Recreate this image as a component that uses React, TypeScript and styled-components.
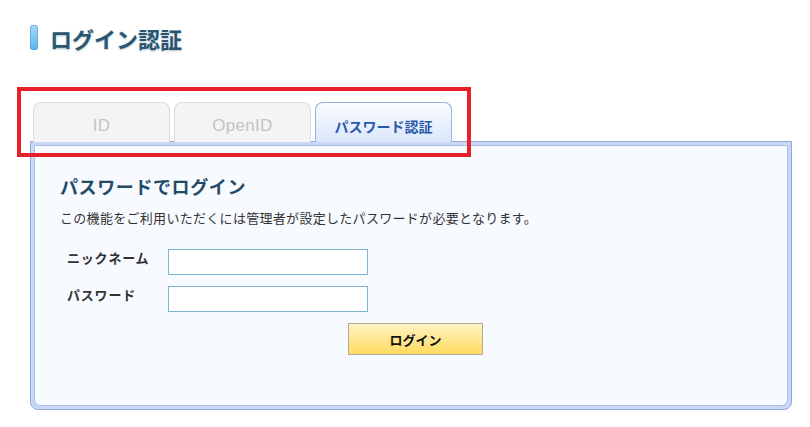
import React, { useState } from 'react';
import styled, { createGlobalStyle, css } from 'styled-components';

const GlobalStyle = createGlobalStyle`
  html, body {
    margin: 0;
    padding: 0;
    background: #ffffff;
    font-family: "Liberation Sans", "Noto Sans CJK JP", sans-serif;
  }
`;

const Page = styled.div`
  position: relative;
  width: 810px;
  height: 427px;
  padding: 25px 0 0 30px;
  box-sizing: border-box;
`;

// ページ見出し
const PageTitle = styled.h1`
  display: flex;
  align-items: center;
  gap: 12px;
  margin: 0;
  height: 25px;
  font-size: 22px;
  font-weight: bold;
  color: #2a5674;
  text-shadow: 0 1px 2px rgba(40, 80, 110, 0.35);
  font-family: "Noto Sans CJK JP", sans-serif;
`;

const TitleMark = styled.span`
  width: 8px;
  height: 25px;
  border-radius: 3px;
  background: linear-gradient(#a8dbf8, #5cb3ea);
  box-shadow: inset 0 0 0 1px rgba(70, 150, 210, 0.5);
`;

const TabBar = styled.div`
  display: flex;
  gap: 4px;
  margin: 52px 0 0 3px;
  position: relative;
  z-index: 1;
  margin-bottom: -1px;
`;

const Tab = styled.button<{ $active?: boolean }>`
  width: 137px;
  height: 40px;
  box-sizing: border-box;
  border-radius: 8px 8px 0 0;
  font-family: "Liberation Sans", "Noto Sans CJK JP", sans-serif;
  padding: 6px 0 0;
  cursor: pointer;
  ${(p) =>
    p.$active
      ? css`
          border: 1px solid #9ab3e2;
          border-bottom: none;
          background: linear-gradient(#fbfdff 0%, #eef4fe 40%, #d9e6fb 100%);
          color: #2759a8;
          font-size: 14px;
          font-weight: bold;
          font-family: "Noto Sans CJK JP", sans-serif;
        `
      : css`
          border: 1px solid #dcdcdc;
          border-bottom: none;
          background: #f4f4f4;
          color: #c3c3c3;
          font-size: 17px;
          letter-spacing: 0.3px;
        `}
`;

const Panel = styled.div`
  width: 762px;
  height: 269px;
  box-sizing: border-box;
  border: 1px solid #8ea9dd;
  border-radius: 0 0 8px 8px;
  background: #c9d8f4;
  padding: 3px;
`;

const PanelInner = styled.div`
  height: 100%;
  box-sizing: border-box;
  border: 1px solid #a9bfe8;
  border-radius: 0 0 6px 6px;
  background: #f7faff;
  padding: 28px 0 0 25px;
`;

const SectionTitle = styled.h2`
  margin: 0;
  font-size: 18px;
  letter-spacing: 0.6px;
  line-height: 24px;
  font-weight: bold;
  color: #234a66;
  font-family: "Noto Sans CJK JP", sans-serif;
`;

const Lead = styled.p`
  margin: 11px 0 0;
  font-size: 13px;
  letter-spacing: 0.3px;
  line-height: 18px;
  color: #333333;
  font-family: "Noto Sans CJK JP", sans-serif;
`;

const Form = styled.div`
  display: grid;
  grid-template-columns: 101px 200px;
  row-gap: 11px;
  margin: 22px 0 0 7px;
  align-items: center;
`;

const Label = styled.label`
  font-size: 13px;
  letter-spacing: 0.8px;
  font-weight: bold;
  color: #333333;
  font-family: "Noto Sans CJK JP", sans-serif;
  margin-top: -9px;
`;

const Input = styled.input`
  width: 200px;
  height: 26px;
  box-sizing: border-box;
  border: 1px solid #7fb3d0;
  background: #ffffff;
  outline: none;
`;

const SubmitRow = styled.div`
  margin: 11px 0 0 288px;
`;

const SubmitButton = styled.button`
  width: 135px;
  height: 32px;
  border: 1px solid #b0aa98;
  background: linear-gradient(#fff2c4, #ffdb5e);
  font-size: 13px;
  font-weight: bold;
  color: #111111;
  font-family: "Noto Sans CJK JP", sans-serif;
  cursor: pointer;
`;

// 注目枠（赤）
const Highlight = styled.div`
  position: absolute;
  left: 17px;
  top: 87px;
  width: 454px;
  height: 70px;
  box-sizing: border-box;
  border: 4px solid #e8202a;
  pointer-events: none;
  z-index: 2;
`;

const tabs = ['ID', 'OpenID', 'パスワード認証'];

export default function App() {
  const [current, setCurrent] = useState('パスワード認証');

  return (
    <>
      <GlobalStyle />
      <Page>
        <PageTitle>
          <TitleMark />
          ログイン認証
        </PageTitle>
        <TabBar>
          {tabs.map((t) => (
            <Tab key={t} $active={t === current} onClick={() => setCurrent(t)}>
              {t}
            </Tab>
          ))}
        </TabBar>
        <Panel>
          <PanelInner>
            <SectionTitle>パスワードでログイン</SectionTitle>
            <Lead>この機能をご利用いただくには管理者が設定したパスワードが必要となります。</Lead>
            <Form>
              <Label>ニックネーム</Label>
              <Input type="text" />
              <Label>パスワード</Label>
              <Input type="password" />
            </Form>
            <SubmitRow>
              <SubmitButton>ログイン</SubmitButton>
            </SubmitRow>
          </PanelInner>
        </Panel>
        <Highlight />
      </Page>
    </>
  );
}
